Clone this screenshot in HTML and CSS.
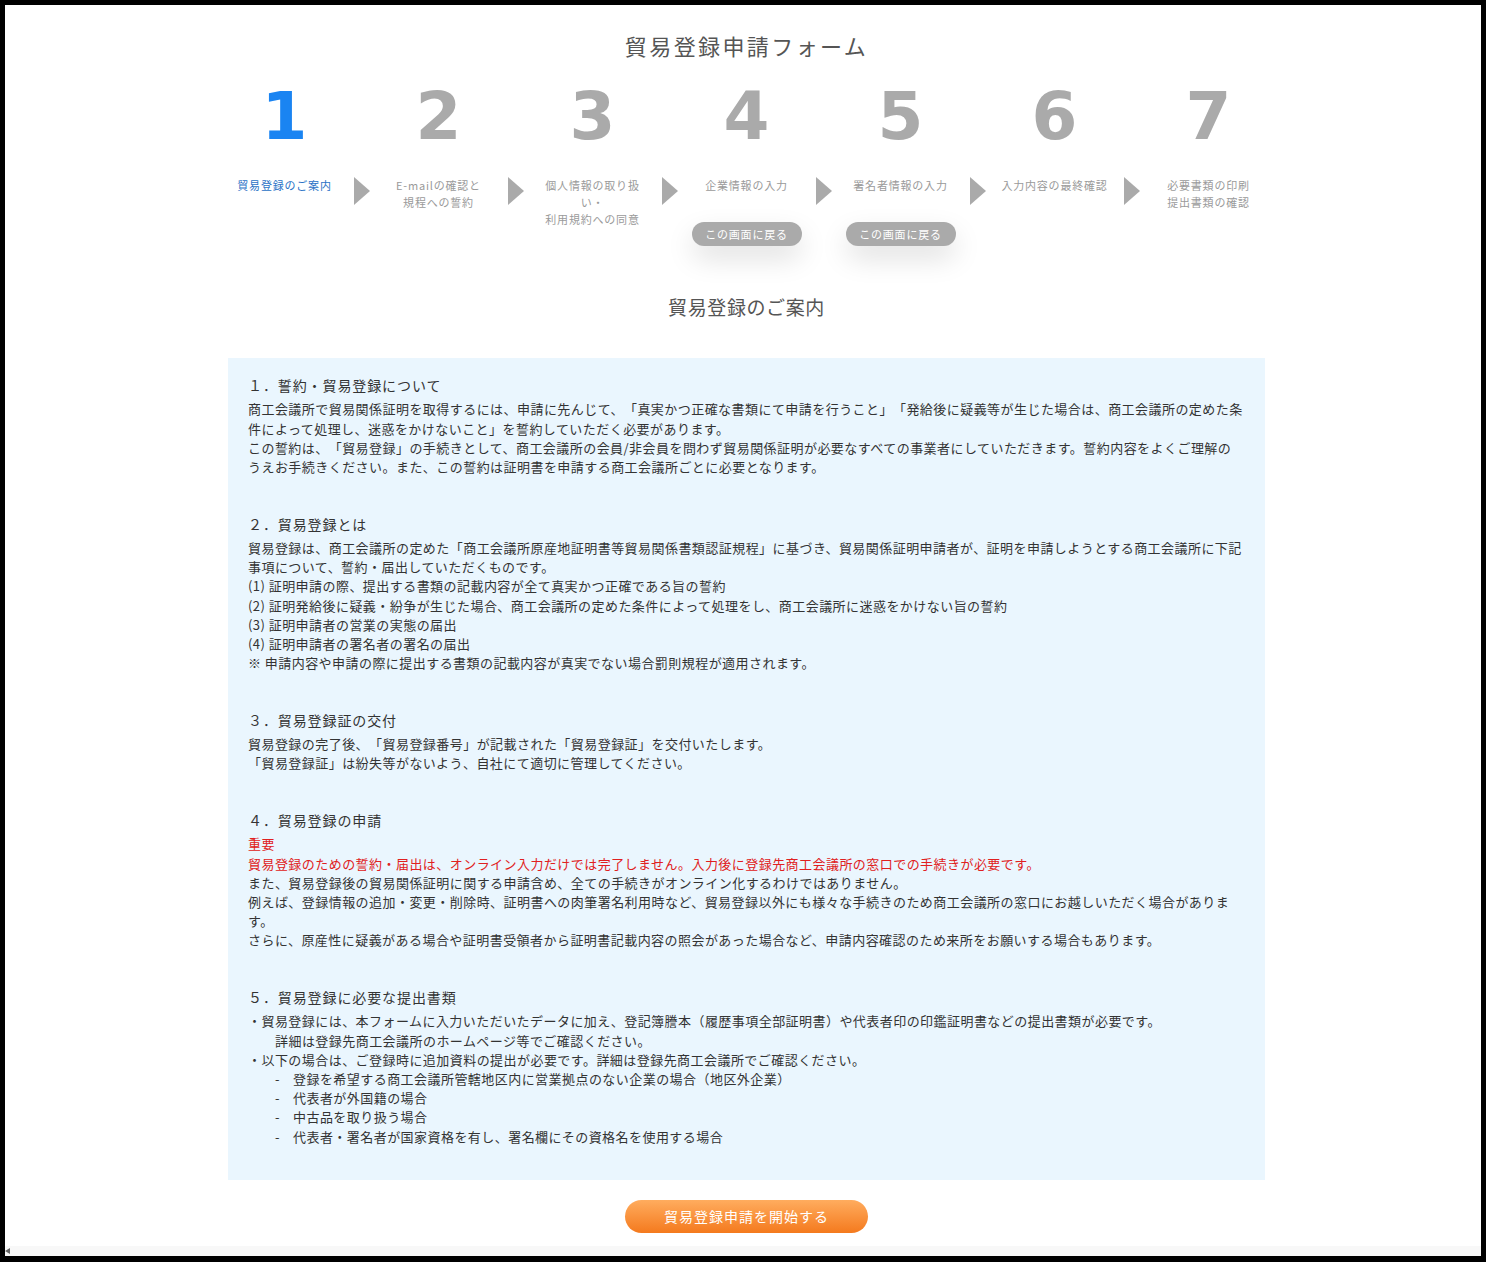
FILE: index.html
```html
<!DOCTYPE html>
<html lang="ja">
<head>
<meta charset="utf-8">
<title>貿易登録申請フォーム</title>
<link rel="stylesheet" href="styles.css">
</head>
<body>
<div class="frame">
  <main class="page">
    <h1 class="form-title">貿易登録申請フォーム</h1>
    <ol class="steps">
      <li class="step active"><div class="num">1</div><div class="label">貿易登録のご案内</div></li>
      <li class="step"><div class="num">2</div><div class="label">E-mailの確認と<br>規程への誓約</div></li>
      <li class="step"><div class="num">3</div><div class="label">個人情報の取り扱い・<br>利用規約への同意</div></li>
      <li class="step"><div class="num">4</div><div class="label">企業情報の入力</div><a class="back-btn">この画面に戻る</a></li>
      <li class="step"><div class="num">5</div><div class="label">署名者情報の入力</div><a class="back-btn">この画面に戻る</a></li>
      <li class="step"><div class="num">6</div><div class="label">入力内容の最終確認</div></li>
      <li class="step"><div class="num">7</div><div class="label">必要書類の印刷<br>提出書類の確認</div></li>
    </ol>
    <h2 class="section-title">貿易登録のご案内</h2>
    <div class="content">
      <section class="block">
        <h3 class="block-title">１．誓約・貿易登録について</h3>
        <p>商工会議所で貿易関係証明を取得するには、申請に先んじて、「真実かつ正確な書類にて申請を行うこと」「発給後に疑義等が生じた場合は、商工会議所の定めた条件によって処理し、迷惑をかけないこと」を誓約していただく必要があります。</p>
        <p>この誓約は、「貿易登録」の手続きとして、商工会議所の会員/非会員を問わず貿易関係証明が必要なすべての事業者にしていただきます。誓約内容をよくご理解のうえお手続きください。また、この誓約は証明書を申請する商工会議所ごとに必要となります。</p>
      </section>
      <section class="block">
        <h3 class="block-title">２．貿易登録とは</h3>
        <p>貿易登録は、商工会議所の定めた「商工会議所原産地証明書等貿易関係書類認証規程」に基づき、貿易関係証明申請者が、証明を申請しようとする商工会議所に下記事項について、誓約・届出していただくものです。</p>
        <p>(1) 証明申請の際、提出する書類の記載内容が全て真実かつ正確である旨の誓約</p>
        <p>(2) 証明発給後に疑義・紛争が生じた場合、商工会議所の定めた条件によって処理をし、商工会議所に迷惑をかけない旨の誓約</p>
        <p>(3) 証明申請者の営業の実態の届出</p>
        <p>(4) 証明申請者の署名者の署名の届出</p>
        <p>※ 申請内容や申請の際に提出する書類の記載内容が真実でない場合罰則規程が適用されます。</p>
      </section>
      <section class="block">
        <h3 class="block-title">３．貿易登録証の交付</h3>
        <p>貿易登録の完了後、「貿易登録番号」が記載された「貿易登録証」を交付いたします。</p>
        <p>「貿易登録証」は紛失等がないよう、自社にて適切に管理してください。</p>
      </section>
      <section class="block">
        <h3 class="block-title">４．貿易登録の申請</h3>
        <p class="warn">重要</p>
        <p class="warn">貿易登録のための誓約・届出は、オンライン入力だけでは完了しません。入力後に登録先商工会議所の窓口での手続きが必要です。</p>
        <p>また、貿易登録後の貿易関係証明に関する申請含め、全ての手続きがオンライン化するわけではありません。</p>
        <p>例えば、登録情報の追加・変更・削除時、証明書への肉筆署名利用時など、貿易登録以外にも様々な手続きのため商工会議所の窓口にお越しいただく場合があります。</p>
        <p>さらに、原産性に疑義がある場合や証明書受領者から証明書記載内容の照会があった場合など、申請内容確認のため来所をお願いする場合もあります。</p>
      </section>
      <section class="block">
        <h3 class="block-title">５．貿易登録に必要な提出書類</h3>
        <p>・貿易登録には、本フォームに入力いただいたデータに加え、登記簿謄本（履歴事項全部証明書）や代表者印の印鑑証明書などの提出書類が必要です。</p>
        <p class="indent">詳細は登録先商工会議所のホームページ等でご確認ください。</p>
        <p>・以下の場合は、ご登録時に追加資料の提出が必要です。詳細は登録先商工会議所でご確認ください。</p>
        <p class="indent"><span class="dash">-</span>登録を希望する商工会議所管轄地区内に営業拠点のない企業の場合（地区外企業）</p>
        <p class="indent"><span class="dash">-</span>代表者が外国籍の場合</p>
        <p class="indent"><span class="dash">-</span>中古品を取り扱う場合</p>
        <p class="indent"><span class="dash">-</span>代表者・署名者が国家資格を有し、署名欄にその資格名を使用する場合</p>
      </section>
    </div>
    <a class="start-btn">貿易登録申請を開始する</a>
  </main>
  <div class="hscroll"><span class="hscroll-arrow"></span></div>
</div>
</body>
</html>
```
FILE: styles.css
```css
html {
  background: #000;
}
body {
  margin: 0;
  padding: 5px 5px 6px 5px;
  background: #000;
  font-family: "Noto Sans CJK JP", "Noto Sans", sans-serif;
  color: #333;
  text-spacing-trim: space-all;
}
.frame {
  height: 1251px;
  background: #fff;
  display: flex;
  flex-direction: column;
  overflow: hidden;
}
.page {
  flex: 1;
  padding: 25px 0 0 7px;
}
.form-title {
  margin: 0;
  text-align: center;
  font-size: 22px;
  font-weight: normal;
  letter-spacing: 2.4px;
  line-height: 30px;
  color: #555;
}
.steps {
  list-style: none;
  margin: 24px 0 0;
  padding: 0;
  display: grid;
  grid-template-columns: repeat(7, 154px);
  justify-content: center;
}
.step {
  position: relative;
  display: flex;
  flex-direction: column;
  align-items: center;
}
.step:not(:last-child)::after {
  content: "";
  position: absolute;
  right: -8px;
  top: 93px;
  width: 0;
  height: 0;
  border-left: 16px solid #aaa;
  border-top: 14px solid transparent;
  border-bottom: 14px solid transparent;
}
.num {
  font-family: "DejaVu Sans", Verdana, sans-serif;
  font-weight: bold;
  font-size: 66px;
  line-height: 66px;
  color: #aaa;
}
.label {
  margin-top: 27px;
  width: 112px;
  min-height: 34px;
  text-align: center;
  font-size: 11px;
  line-height: 17px;
  letter-spacing: 0.8px;
  color: #9a9a9a;
}
.step.active .num {
  color: #1a84f2;
}
.step.active .label {
  color: #2a72c6;
}
.back-btn {
  display: block;
  margin-top: 11px;
  width: 110px;
  height: 24px;
  border-radius: 12px;
  background: #aaa;
  color: #fff;
  font-size: 11px;
  letter-spacing: 0.8px;
  line-height: 24px;
  text-align: center;
  box-shadow: 0 12px 28px rgba(0, 0, 0, 0.13);
}
.section-title {
  margin: 48px 0 0;
  text-align: center;
  font-size: 19px;
  font-weight: normal;
  letter-spacing: 0.6px;
  line-height: 26px;
  color: #555;
}
.content {
  box-sizing: border-box;
  width: 1037px;
  margin: 38px auto 0;
  padding: 17px 21px 34px 20px;
  background: #eaf6fe;
}
.block + .block {
  margin-top: 37.4px;
}
.block-title {
  margin: 0 0 4.4px;
  font-size: 14px;
  font-weight: normal;
  letter-spacing: 0.9px;
  line-height: 20px;
  color: #333;
}
.block p {
  margin: 0;
  font-size: 13px;
  letter-spacing: 0.45px;
  line-height: 19.2px;
}
.block p.warn {
  color: #e02020;
}
.block p.indent {
  padding-left: 27px;
}
.dash {
  display: inline-block;
  width: 18px;
}
.start-btn {
  display: block;
  width: 243px;
  height: 33px;
  margin: 20px auto 0;
  border-radius: 17px;
  background: linear-gradient(#ffac5e, #f47a1e);
  color: #fff;
  font-size: 14px;
  letter-spacing: 1px;
  line-height: 33px;
  text-align: center;
}
.hscroll {
  height: 10px;
  background: #f8f8f8;
  display: flex;
  align-items: center;
}
.hscroll-arrow {
  width: 0;
  height: 0;
  border-right: 5px solid #666;
  border-top: 3px solid transparent;
  border-bottom: 3px solid transparent;
}
```
